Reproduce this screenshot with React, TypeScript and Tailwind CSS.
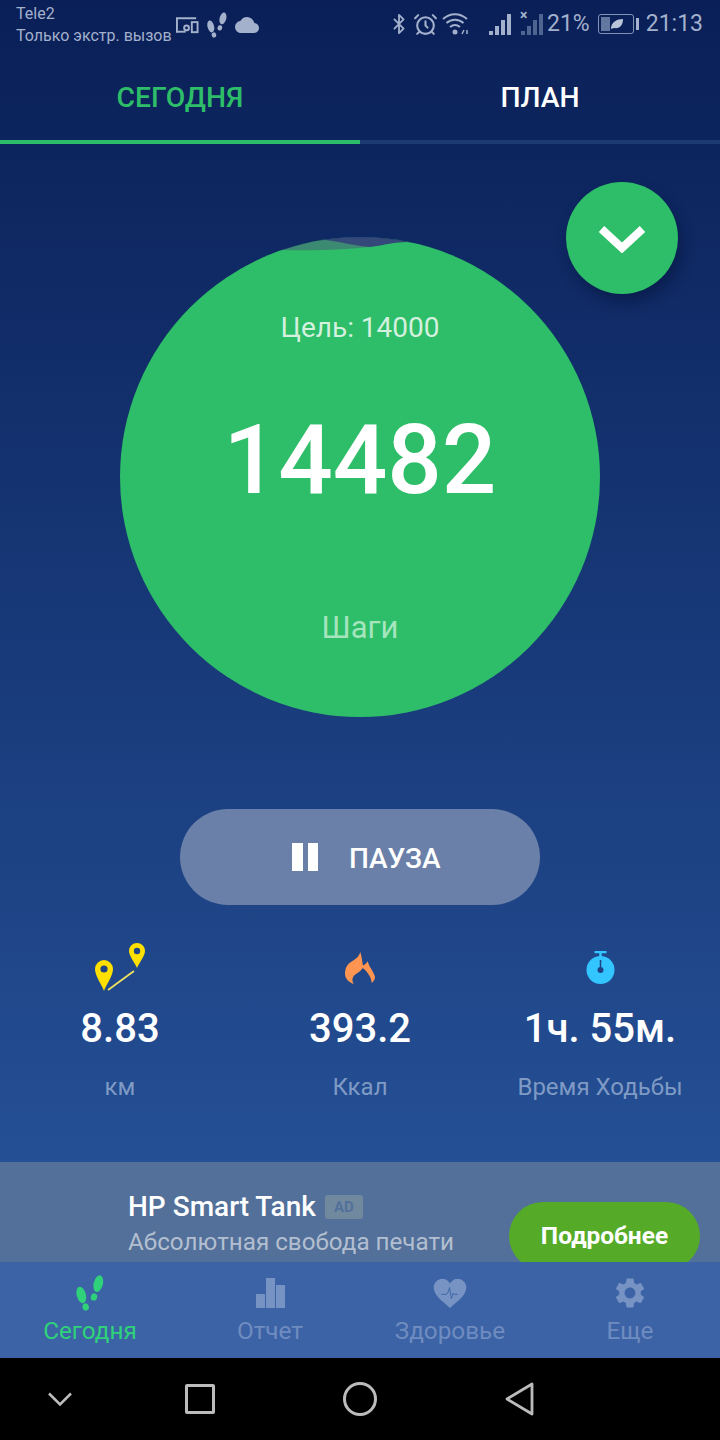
import React from "react";
import { MdCloud, MdSettings } from "react-icons/md";
import { Bluetooth, AlarmClock } from "lucide-react";

function Steps({ className }: { className: string }) {
  return (
    <svg viewBox="0 0 28 36" className={className} fill="currentColor">
      <ellipse cx="5.300" cy="20" rx="4.600" ry="8.500" transform="rotate(-14 5.300 20)" />
      <ellipse cx="9.700" cy="32" rx="3.200" ry="3.700" transform="rotate(-14 9.700 32)" />
      <ellipse cx="22.300" cy="8.700" rx="4.600" ry="8.500" transform="rotate(14 22.300 8.700)" />
      <ellipse cx="18" cy="22" rx="3.200" ry="3.700" transform="rotate(14 18 22)" />
    </svg>
  );
}

function Stat({ icon, value, label }: { icon: React.ReactNode; value: string; label: string }) {
  return (
    <div className="flex flex-col items-center">
      <div className="flex h-[50px] items-start justify-center">{icon}</div>
      <div className="mt-[14px] text-[40px] leading-[46px] font-medium text-white">{value}</div>
      <div className="mt-[21px] text-[24px] leading-[28px] text-[#7f9ac4]">{label}</div>
    </div>
  );
}

function NavItem({ icon, label, active }: { icon: React.ReactNode; label: string; active?: boolean }) {
  return (
    <div className="flex flex-col items-center">
      <div className={`flex h-[40px] items-center justify-center ${active ? "text-[#2fd27a]" : "text-[#7793c4]"}`}>{icon}</div>
      <div className={`mt-[3px] text-[24.300px] leading-[30px] ${active ? "text-[#2fd27a]" : "text-[#6f8cc0]"}`}>{label}</div>
    </div>
  );
}

export default function App() {
  return (
    <div className="flex h-[1440px] w-[720px] flex-col overflow-hidden bg-black font-['Roboto',sans-serif]">
      <div className="flex h-[1358px] flex-col bg-gradient-to-b from-[#0a1f57] to-[#2a58a0]">
        {/* status bar */}
        <div className="flex h-[56px] items-start text-[#a3b1cd]">
          <div className="ml-[16px] mt-[3px] text-[16px] leading-[22px]">
            <div>Tele2</div>
            <div>Только экстр. вызов</div>
          </div>
          <div className="ml-[4px] mt-[12px] flex items-center gap-[8px]">
            <svg viewBox="0 0 24 18" className="h-[18px] w-[23px]" fill="none" stroke="currentColor" strokeWidth="2">
              <path d="M1 17V2h20" />
              <path d="M1 16h9" />
              <rect x="16.500" y="6" width="6" height="10.500" />
              <circle cx="11" cy="12" r="2.500" />
            </svg>
            <Steps className="h-[26px] w-[20px]" />
            <MdCloud className="h-[24px] w-[24px]" />
          </div>
          <div className="ml-auto mr-[17px] mt-[10px] flex items-center">
            <Bluetooth className="h-[24px] w-[22px]" strokeWidth={2} />
            <AlarmClock className="ml-[3px] h-[25px] w-[25px]" strokeWidth={2} />
            <svg viewBox="0 0 28 22" className="ml-[4px] h-[22px] w-[28px]" fill="none" stroke="currentColor" strokeWidth="2">
              <path d="M1 6c7-6.500 17-6.500 24 0M4.500 10c5-4.500 12-4.500 17 0M8 14c3-2.500 7-2.500 10 0" />
              <circle cx="13" cy="19" r="2.500" fill="currentColor" stroke="none" />
              <path d="M20 21l2-4M25 17v4" strokeWidth="1.500" />
            </svg>
            <div className="ml-[19px] flex h-[22px] items-end gap-[2px]">
              {[4, 9, 15, 21].map((h) => (
                <div key={h} className="w-[4px] bg-[#a3b1cd]" style={{ height: h }} />
              ))}
            </div>
            <div className="relative ml-[10px] flex h-[22px] items-end gap-[2px]">
              {[4, 9, 15, 21].map((h) => (
                <div key={h} className="w-[4px] bg-[#4f6591]" style={{ height: h }} />
              ))}
              <div className="absolute left-[-1px] top-[-4px] text-[14px] leading-[12px] font-bold text-[#a3b1cd]">×</div>
            </div>
            <div className="ml-[4px] text-[23px] leading-[28px]">21%</div>
            <div className="relative ml-[8px] flex h-[20px] w-[36px] items-center rounded-[3px] border border-[#8292b3] p-[2px]">
              <div className="h-full w-[9px] bg-[#63789f]" />
              <svg viewBox="0 0 14 12" className="absolute left-[11px] top-[2px] h-[14px] w-[14px]" fill="#b9c4d8">
                <path d="M1 11C1 4 7 1 13 1c0 6-3 10-9 9Z" />
              </svg>
            </div>
            <div className="ml-[2px] h-[12px] w-[3px] bg-[#a3b1cd]" />
            <div className="ml-[7px] text-[23px] leading-[28px]">21:13</div>
          </div>
        </div>

        {/* tabs */}
        <div className="grid h-[88px] grid-cols-2">
          <div className="flex flex-col">
            <div className="flex flex-1 items-center justify-center text-[28.300px] font-medium text-[#2ebd68]">СЕГОДНЯ</div>
            <div className="h-[4px] bg-[#2ebd68]" />
          </div>
          <div className="flex flex-col">
            <div className="flex flex-1 items-center justify-center text-[28.300px] font-medium text-white">ПЛАН</div>
            <div className="h-[4px] bg-[#1e3a72]" />
          </div>
        </div>

        {/* hero */}
        <div className="relative flex flex-col items-center pt-[93px]">
          <div className="relative flex h-[480px] w-[480px] flex-col items-center overflow-hidden rounded-full bg-[#2ebd68] text-white">
            <svg viewBox="0 0 480 30" className="absolute left-0 top-0 h-[30px] w-[480px]">
              <rect width="480" height="30" fill="#0e2a5e" />
              <circle cx="240" cy="240" r="240" fill="#34487a" />
              <path d="M162 13C180 8 195 3 205 3C222 5 235 9 250 10L250 30L162 30Z" fill="#3d8a72" />
              <path d="M162 13C200 14 230 12 250 10C265 8 275 5 287 5C340 12 420 22 480 30L0 30L0 26Z" fill="#2ebd68" />
            </svg>
            <div className="relative mt-[74px] text-[28px] leading-[34px] text-[#d4f1df]">Цель: 14000</div>
            <div className="relative mt-[59px] text-[96px] leading-[112px] font-medium">14482</div>
            <div className="relative mt-[92px] text-[31px] leading-[40px] text-[#a5e5be]">Шаги</div>
          </div>
          <div className="absolute right-[42px] top-[38px] flex h-[112px] w-[112px] items-center justify-center rounded-full bg-[#2ebd68] shadow-[4px_8px_14px_rgba(5,15,50,0.45)]">
            <svg viewBox="0 0 48 30" className="h-[30px] w-[48px]" fill="none" stroke="white" strokeWidth="8">
              <path d="M3.500 6L24 25L44.500 6" />
            </svg>
          </div>
        </div>

        {/* pause */}
        <div className="mx-auto mt-[92px] flex h-[96px] w-[360px] items-center rounded-full bg-[#6a80a9] pl-[112px]">
          <div className="flex gap-[5px]">
            <div className="h-[28px] w-[10.500px] bg-white" />
            <div className="h-[28px] w-[10.500px] bg-white" />
          </div>
          <div className="ml-[31px] pt-[4px] text-[28px] font-medium text-white">ПАУЗА</div>
        </div>

        {/* stats */}
        <div className="mt-[37px] grid grid-cols-3">
          <Stat
            value="8.83"
            label="км"
            icon={
              <svg viewBox="0 0 50 48" className="mt-[1px] h-[48px] w-[50px]">
                <path d="M9 48C7 42 0 33 0 26a9 9 0 0 1 18 0c0 7-7 16-9 22Z" fill="#ffe000" />
                <circle cx="9" cy="26" r="3.600" fill="#1f4484" />
                <path d="M13 47L39 28" stroke="#f0e060" strokeWidth="1.800" fill="none" />
                <path d="M42 25C40 20 34 13 34 8a8 8 0 0 1 16 0c0 5-6 12-8 17Z" fill="#ffe000" />
                <circle cx="42" cy="8" r="3.200" fill="#1f4484" />
              </svg>
            }
          />
          <Stat
            value="393.2"
            label="Ккал"
            icon={
              <svg viewBox="0 0 30 32" className="mt-[10px] h-[32px] w-[30px]" fill="#ff9550">
                <path d="M15.300 0C16.800 4 17 9 18 13.500C20 13 21.500 11 22.700 9.300C24 15 29 20 30 25C30 27.500 28.500 29.500 26.700 31C26.500 26 23 20 17.700 16C15.500 19.500 13 20.500 11 22C8 24 6 27 8.700 32C3.500 30 0 26.500 0 21.700C0 16 2.500 12 6 10C10 7.500 14 5 15.300 0Z" />
              </svg>
            }
          />
          <Stat
            value="1ч. 55м."
            label="Время Ходьбы"
            icon={
              <svg viewBox="0 0 28 33" className="mt-[9px] h-[33px] w-[29px]">
                <path d="M8 1h12M14 1v6" stroke="#33c5ff" strokeWidth="2.500" fill="none" />
                <ellipse cx="14" cy="19" rx="14" ry="14" fill="#33c5ff" />
                <path d="M14 9v10" stroke="#1e4384" strokeWidth="1.500" />
                <circle cx="14" cy="19" r="3" fill="#1e4384" />
              </svg>
            }
          />
        </div>

        {/* ad */}
        <div className="mt-[61px] flex h-[100px] overflow-hidden bg-[#527099]">
          <div className="ml-[128px] mt-[28px] flex-1">
            <div className="flex items-center">
              <div className="text-[28px] leading-[34px] font-medium text-white">HP Smart Tank</div>
              <div className="ml-[9px] flex h-[24px] w-[38px] items-center justify-center rounded-[3px] bg-[#70899f] text-[15px] font-bold text-[#527099]">AD</div>
            </div>
            <div className="mt-[1px] text-[24.200px] leading-[34px] text-[#b3bfd0]">Абсолютная свобода печати</div>
          </div>
          <div className="mr-[20px] mt-[40px] flex h-[68px] w-[191px] items-center justify-center rounded-full bg-[#55ab28] text-[24.500px] font-bold text-white">Подробнее</div>
        </div>

        {/* bottom nav */}
        <div className="grid h-[96px] grid-cols-4 bg-[#3c63a5] pt-[11px]">
          <NavItem active label="Сегодня" icon={<Steps className="h-[36px] w-[28px]" />} />
          <NavItem
            label="Отчет"
            icon={
              <div className="flex items-end gap-[1px]">
                <div className="h-[14px] w-[9px] bg-current" />
                <div className="h-[30px] w-[9px] bg-current" />
                <div className="h-[23px] w-[9px] bg-current" />
              </div>
            }
          />
          <NavItem
            label="Здоровье"
            icon={
              <svg viewBox="0 0 36 32" className="h-[29px] w-[36px]">
                <path d="M18 32C10 25 0 18 0 9.500A9.500 9.500 0 0 1 18 5a9.500 9.500 0 0 1 18 4.500C36 18 26 25 18 32Z" fill="currentColor" />
                <path d="M8.500 17h5l2-1.500 2-6 2 12 2-6 1 1.500h4" fill="none" stroke="#3c63a5" strokeWidth="1" />
              </svg>
            }
          />
          <NavItem label="Еще" icon={<MdSettings className="h-[36px] w-[36px]" />} />
        </div>
      </div>

      {/* system nav */}
      <div className="flex flex-1 items-center pl-[48px]">
        <svg viewBox="0 0 24 15" className="h-[15px] w-[24px]" fill="none" stroke="#bcbcbc" strokeWidth="2.500"><path d="M1 1.500l11 11 11-11" /></svg>
        <div className="ml-[113px] h-[30px] w-[30px] rounded-[2px] border-[3px] border-[#bcbcbc]" />
        <div className="ml-[128px] h-[34px] w-[34px] rounded-full border-[3px] border-[#bcbcbc]" />
        <svg viewBox="0 0 29 34" className="ml-[128px] h-[34px] w-[29px]" fill="none" stroke="#bcbcbc" strokeWidth="2.800" strokeLinejoin="round"><path d="M27 2v30L2 17Z" /></svg>
      </div>
    </div>
  );
}
